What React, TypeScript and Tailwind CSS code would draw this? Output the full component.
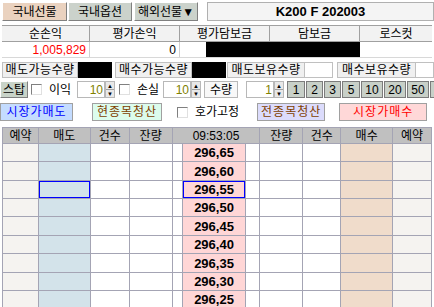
import React from 'react';

const font = { fontFamily: '"Liberation Sans", "Noto Sans CJK KR", sans-serif' };

const prices = ['296.65', '296.60', '296.55', '296.50', '296.45', '296.40', '296.35', '296.30', '296.25'];
const rowHeights = ['h-[18px]', 'h-[19px]', 'h-[18px]', 'h-[18px]', 'h-[19px]', 'h-[18px]', 'h-[19px]', 'h-[18px]', 'h-[18px]'];

const cols = [
  { w: 'w-[36px]', bg: 'bg-[#f5f3f0]' },
  { w: 'w-[52px]', bg: 'bg-[#d3e3ea]' },
  { w: 'w-[39px]', bg: 'bg-white' },
  { w: 'w-[43px]', bg: 'bg-white' },
  { w: 'w-[10px]', bg: 'bg-white' },
  { w: 'w-[64px]', bg: 'bg-[#ffd6d6]' },
  { w: 'w-[14px]', bg: 'bg-white' },
  { w: 'w-[43px]', bg: 'bg-white' },
  { w: 'w-[38px]', bg: 'bg-white' },
  { w: 'w-[52px]', bg: 'bg-[#f0dccb]' },
  { w: 'w-[39px]', bg: 'bg-[#f5f3f0]' },
];

const headers = [
  { label: '예약', w: 'w-[36px]' },
  { label: '매도', w: 'w-[52px]' },
  { label: '건수', w: 'w-[39px]' },
  { label: '잔량', w: 'w-[43px]' },
  { label: '09:53:05', w: 'w-[88px]' },
  { label: '잔량', w: 'w-[43px]' },
  { label: '건수', w: 'w-[38px]' },
  { label: '매수', w: 'w-[52px]' },
  { label: '예약', w: 'w-[39px]' },
];

// quick-qty buttons: label + width
const qtyButtons = [
  { n: '1', w: 'w-[18px]' },
  { n: '2', w: 'w-[17px]' },
  { n: '3', w: 'w-[17px]' },
  { n: '5', w: 'w-[18px]' },
  { n: '10', w: 'w-[22px]' },
  { n: '20', w: 'w-[22px]' },
  { n: '50', w: 'w-[22px]' },
  { n: '100', w: 'w-[28px]' },
];

function Check({ className = '' }: { className?: string }) {
  return (
    <div
      className={`shrink-0 w-[11px] h-[11px] bg-white border border-t-[#808080] border-l-[#808080] border-b-[#e0e0e0] border-r-[#e0e0e0] ${className}`}
    />
  );
}

function Spin({ value, w }: { value: string; w: string }) {
  return (
    <div className="flex h-[17px] shrink-0">
      <div
        className={`${w} h-full bg-white border border-[#b8b8b8] flex items-center justify-end pr-[1px] text-[12px] text-[#808000]`}
      >
        {value}
      </div>
      <div className="w-[10px] h-full flex flex-col border border-[#b8b8b8] bg-[#e8e8e8]">
        <div className="flex-1 flex items-center justify-center text-[6px] leading-none border-b border-[#a0a0a0]">▲</div>
        <div className="flex-1 flex items-center justify-center text-[6px] leading-none">▼</div>
      </div>
    </div>
  );
}

export default function App() {
  return (
    <div className="w-[434px] h-[307px] bg-white overflow-hidden text-black select-none" style={font}>
      {/* top tabs */}
      <div className="flex items-center h-[19px] mt-[2px] pl-[2px]">
        <div className="w-[65px] h-full flex items-center justify-center text-[12px] bg-[#ead2bf] border border-t-white border-l-white border-b-[#808080] border-r-[#808080]">
          국내선물
        </div>
        <div className="w-[64px] ml-[1px] h-full flex items-center justify-center text-[12px] bg-[#cbd2cb] border border-t-white border-l-white border-b-[#808080] border-r-[#808080]">
          국내옵션
        </div>
        <div className="w-[64px] ml-[2px] h-full flex items-center justify-center text-[12px] bg-[#cbd2cb] border border-t-white border-l-white border-b-[#808080] border-r-[#808080]">
          해외선물▼
        </div>
        <div className="ml-[9px] flex-1 h-full flex items-center justify-center text-[13px] font-bold bg-[#f4f4f4] border border-[#b0b0b0]">
          K200 F 202003
        </div>
      </div>

      {/* summary table */}
      <div className="mt-[4px] ml-[2px] w-[430px] border-t border-[#a0a0a0]">
        <div className="flex h-[16px] bg-[#f2f2f2] border-b border-[#a0a0a0] text-[12px]">
          <div className="w-[88px] flex items-center justify-center border-r border-[#a0a0a0]">순손익</div>
          <div className="w-[90px] flex items-center justify-center border-r border-[#a0a0a0]">평가손익</div>
          <div className="w-[90px] flex items-center justify-center border-r border-[#a0a0a0]">평가담보금</div>
          <div className="w-[90px] flex items-center justify-center border-r border-[#a0a0a0]">담보금</div>
          <div className="flex-1 flex items-center justify-center">로스컷</div>
        </div>
        <div className="flex h-[16px] text-[12px] border-b border-[#d8d8d8]">
          <div className="w-[88px] flex items-center justify-end pr-[3px] text-[#ff0000] border-r border-[#d0d0d0]">1,005,829</div>
          <div className="w-[90px] flex items-center justify-end pr-[3px] border-r border-[#d0d0d0]">0</div>
          <div className="w-[90px] flex items-center pl-[26px]">
            <div className="w-full h-[15px] bg-black" />
          </div>
          <div className="w-[90px] flex items-center">
            <div className="w-full h-[15px] bg-black" />
          </div>
          <div className="flex-1" />
        </div>
      </div>

      {/* quantity row */}
      <div className="flex items-center h-[16px] mt-[4px] ml-[2px] text-[12px] tracking-[0.5px]">
        <div className="w-[76px] h-full flex items-center justify-center bg-[#f0f0f0] border border-[#c0c0c0]">매도가능수량</div>
        <div className="w-[34px] h-full bg-black" />
        <div className="w-[77px] ml-[3px] h-full flex items-center justify-center bg-[#f0f0f0] border border-[#c0c0c0]">매수가능수량</div>
        <div className="w-[34px] h-full bg-black" />
        <div className="w-[78px] ml-[1px] h-full flex items-center justify-center bg-[#f0f0f0] border border-[#c0c0c0]">매도보유수량</div>
        <div className="w-[28px] h-full bg-white border border-[#c0c0c0] border-l-0" />
        <div className="w-[79px] ml-[4px] h-full flex items-center justify-center bg-[#f0f0f0] border border-[#c0c0c0]">매수보유수량</div>
        <div className="flex-1 h-full bg-white border border-[#c0c0c0] border-l-0" />
      </div>

      {/* stop row */}
      <div className="flex items-center h-[17px] mt-[3px] text-[12px] overflow-hidden">
        <div className="shrink-0 w-[28px] h-full flex items-center justify-center bg-[#c8d3c8] border border-t-white border-l-white border-b-[#808080] border-r-[#808080]">
          스탑
        </div>
        <Check className="ml-[3px]" />
        <span className="shrink-0 ml-[7px] w-[28px]">이익</span>
        <Spin value="10" w="w-[28px]" />
        <Check className="ml-[4px]" />
        <span className="shrink-0 ml-[7px] w-[26px]">손실</span>
        <Spin value="10" w="w-[28px]" />
        <div className="shrink-0 ml-[3px] w-[34px] h-full flex items-center justify-center bg-[#f8f8f8] border border-[#b8b8b8]">수량</div>
        <div className="shrink-0 ml-[8px]">
          <Spin value="1" w="w-[28px]" />
        </div>
        <div className="flex shrink-0 ml-[3px] h-full gap-[1px]">
          {qtyButtons.map((b, i) => (
            <div
              key={i}
              className={`${b.w} h-full flex items-center justify-center bg-[#c8d0c8] border border-[#7c7c7c] shrink-0`}
            >
              {b.n}
            </div>
          ))}
        </div>
      </div>

      {/* order buttons */}
      <div className="flex items-center h-[18px] mt-[5px] text-[12px]">
        <div className="w-[73px] h-full flex items-center justify-center bg-[#c4dcff] text-[#0000ff] border border-[#a0a0a0] tracking-[1px]">
          시장가매도
        </div>
        <div className="ml-[19px] w-[70px] h-full flex items-center justify-center bg-[#dcfcec] text-[#804000] border border-[#a0a0a0] tracking-[1px]">
          현종목청산
        </div>
        <Check className="ml-[15px]" />
        <span className="ml-[7px]">호가고정</span>
        <div className="ml-[18px] w-[68px] h-full flex items-center justify-center bg-[#dcdcfc] text-[#804000] border border-[#a0a0a0] tracking-[1px]">
          전종목청산
        </div>
        <div className="ml-[14px] w-[88px] h-full flex items-center justify-center bg-[#ffd8d8] text-[#ff0000] border border-[#a0a0a0] tracking-[1px]">
          시장가매수
        </div>
      </div>

      {/* order book */}
      <div className="mt-[6px] ml-[2px] w-[430px] border-l border-[#a4a4b4]">
        <div className="flex h-[17px] bg-[#c0c0c0] border-t border-b border-[#a4a4b4] text-[12px]">
          {headers.map((h, i) => (
            <div key={i} className={`${h.w} h-full flex items-center justify-center border-r border-[#a4a4b4]`}>
              {h.label}
            </div>
          ))}
        </div>
        {prices.map((p, r) => (
          <div key={r} className={`flex ${rowHeights[r]}`}>
            {cols.map((c, ci) => {
              const selected = r === 2 && (ci === 1 || ci === 5);
              return (
                <div
                  key={ci}
                  className={`${c.w} ${c.bg} h-full border-r border-b border-[#a4a4b4] flex items-center justify-center ${
                    selected ? 'shadow-[inset_0_0_0_1px_#0000ff]' : ''
                  }`}
                >
                  {ci === 5 && <span className="text-[13px] font-bold leading-none">{p.replace('.', ',')}</span>}
                </div>
              );
            })}
          </div>
        ))}
      </div>
    </div>
  );
}
